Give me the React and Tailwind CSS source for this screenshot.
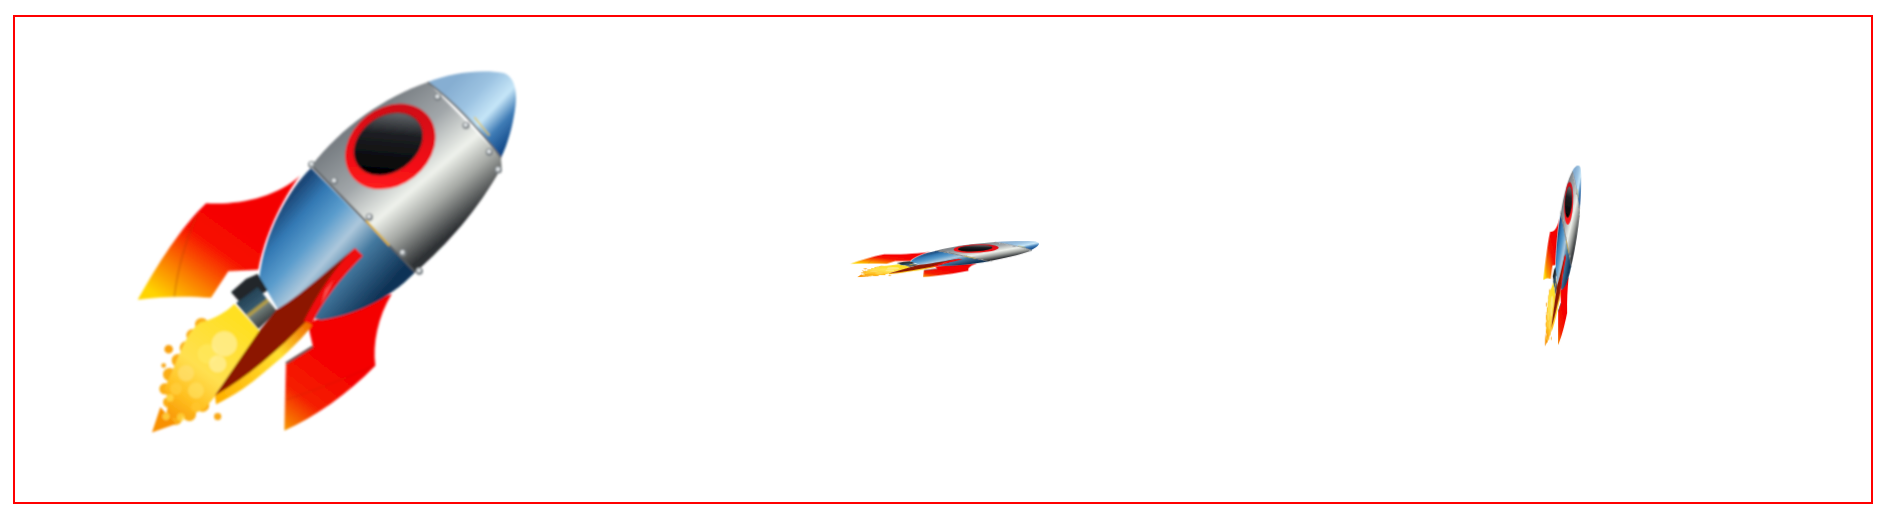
import React from "react";

// flame blobs: [cx, cy, r]
const flameEdge = [
  [242, 792, 20],
  [216, 825, 20],
  [196, 862, 20],
  [172, 900, 20],
  [146, 942, 20],
  [132, 985, 17],
  [142, 1025, 16],
  [130, 1072, 17],
  [165, 1075, 18],
  [205, 1062, 20],
  [245, 1034, 20],
];
const flameBubbles = [
  [195, 938, 24, "#ffe070"],
  [165, 985, 18, "#ffd040"],
  [225, 990, 24, "#ffdf60"],
  [147, 1012, 11, "#ffe050"],
  [225, 1040, 15, "#ffc830"],
  [135, 1068, 11, "#ffe050"],
  [180, 1070, 12, "#ffd840"],
  [260, 880, 30, "#ffe860"],
  [310, 850, 38, "#fff0a0"],
  [290, 910, 26, "#fff0a0"],
];
const rivets = [
  [950, 110],
  [1035, 195],
  [1105, 275],
  [1132, 328],
  [640, 362],
  [745, 470],
  [845, 577],
  [895, 632],
  [572, 312],
];

// same emoji drawing, squashed in different directions
function Rocket({ className = "" }) {
  return (
    <svg viewBox="-21 -31.5 1260 1260" className={`h-[420px] w-[420px] ${className}`}>
      <defs>
        <filter id="soft" x="-5%" y="-5%" width="110%" height="110%">
          <feGaussianBlur stdDeviation="3" />
        </filter>
        <linearGradient id="finLeft" gradientUnits="userSpaceOnUse" x1="340" y1="470" x2="150" y2="735">
          <stop offset="0" stopColor="#f50000" />
          <stop offset="0.32" stopColor="#f81000" />
          <stop offset="0.68" stopColor="#fb7c00" />
          <stop offset="1" stopColor="#ffd400" />
        </linearGradient>
        <linearGradient id="finRight" gradientUnits="userSpaceOnUse" x1="640" y1="900" x2="480" y2="1110">
          <stop offset="0" stopColor="#f50000" />
          <stop offset="0.55" stopColor="#f52000" />
          <stop offset="1" stopColor="#f8a000" />
        </linearGradient>
        <linearGradient id="nose" gradientUnits="userSpaceOnUse" x1="1000" y1="60" x2="1185" y2="235">
          <stop offset="0" stopColor="#86aed2" />
          <stop offset="0.3" stopColor="#9cc3e2" />
          <stop offset="0.56" stopColor="#c6e6f8" />
          <stop offset="0.76" stopColor="#3f7cb6" />
          <stop offset="1" stopColor="#0f4585" />
        </linearGradient>
        <linearGradient id="metal" gradientUnits="userSpaceOnUse" x1="730" y1="170" x2="1010" y2="500">
          <stop offset="0" stopColor="#777d82" />
          <stop offset="0.32" stopColor="#a2a7aa" />
          <stop offset="0.6" stopColor="#eff2ec" />
          <stop offset="0.78" stopColor="#a4a7a3" />
          <stop offset="1" stopColor="#2f3235" />
        </linearGradient>
        <linearGradient id="body" gradientUnits="userSpaceOnUse" x1="450" y1="470" x2="750" y2="735">
          <stop offset="0" stopColor="#1c4676" />
          <stop offset="0.16" stopColor="#3379b4" />
          <stop offset="0.34" stopColor="#5b9dcd" />
          <stop offset="0.52" stopColor="#adc8dc" />
          <stop offset="0.7" stopColor="#44799f" />
          <stop offset="1" stopColor="#0f3356" />
        </linearGradient>
        <linearGradient id="glass" gradientUnits="userSpaceOnUse" x1="870" y1="175" x2="740" y2="330">
          <stop offset="0" stopColor="#6a6e72" />
          <stop offset="0.35" stopColor="#1e2024" />
          <stop offset="1" stopColor="#000000" />
        </linearGradient>
        <linearGradient id="ring" gradientUnits="userSpaceOnUse" x1="900" y1="170" x2="720" y2="360">
          <stop offset="0" stopColor="#d0101a" />
          <stop offset="0.6" stopColor="#f00a14" />
          <stop offset="1" stopColor="#ff1e1e" />
        </linearGradient>
        <linearGradient id="flame" gradientUnits="userSpaceOnUse" x1="370" y1="780" x2="140" y2="1090">
          <stop offset="0" stopColor="#ffe020" />
          <stop offset="0.5" stopColor="#ffe050" />
          <stop offset="0.75" stopColor="#ffc020" />
          <stop offset="1" stopColor="#f89000" />
        </linearGradient>
        <linearGradient id="flameLow" gradientUnits="userSpaceOnUse" x1="560" y1="790" x2="290" y2="1020">
          <stop offset="0" stopColor="#f07000" />
          <stop offset="0.35" stopColor="#ffe030" />
          <stop offset="1" stopColor="#ffb000" />
        </linearGradient>
        <linearGradient id="nozzle" gradientUnits="userSpaceOnUse" x1="370" y1="690" x2="440" y2="780">
          <stop offset="0" stopColor="#1f3a4c" />
          <stop offset="0.5" stopColor="#35596e" />
          <stop offset="0.58" stopColor="#c8a83a" />
          <stop offset="0.66" stopColor="#6f7c78" />
          <stop offset="1" stopColor="#3c4042" />
        </linearGradient>
      </defs>
      <g filter="url(#soft)">
        {/* rear fins */}
        <path
          d="M50 718C110 610 180 500 255 428C350 435 470 410 537 345C480 420 430 530 412 628L322 632L270 712C200 706 120 708 50 718Z"
          fill="url(#finLeft)"
        />
        <path d="M228 462C195 540 170 620 160 708" fill="none" stroke="#a83a10" strokeWidth="3" opacity="0.55" />
        <path
          d="M490 1110L495 905L575 855L560 790L600 770L812 700C770 770 755 850 763 915C680 1000 580 1070 490 1110Z"
          fill="url(#finRight)"
        />
        <path d="M495 908L575 858" stroke="#5a5a5a" strokeWidth="6" fill="none" />
        <path d="M495 1018C580 990 680 950 762 915" fill="none" stroke="#c02000" strokeWidth="2" opacity="0.5" />

        {/* flame */}
        {flameEdge.map(([cx, cy, r]) => (
          <circle key={`${cx}-${cy}`} cx={cx} cy={cy} r={r} fill="#fbae18" />
        ))}
        <path d="M118 1040L93 1116L165 1090Z" fill="#f89000" />
        <path
          d="M340 730L418 815C380 900 330 960 285 1005L250 1045L200 1068L135 1075L142 1020L130 985L165 905C185 860 205 805 240 785C280 775 315 755 340 730Z"
          fill="url(#flame)"
        />
        {flameBubbles.map(([cx, cy, r, fill]) => (
          <circle key={`${cx}-${cy}`} cx={cx} cy={cy} r={r} fill={fill} opacity="0.7" />
        ))}
        <circle cx="143" cy="866" r="13" fill="#f8a010" />
        <circle cx="128" cy="915" r="7" fill="#f8a818" />
        <circle cx="290" cy="1068" r="11" fill="#f8a818" />

        {/* body */}
        <path
          d="M570 322L882 636C800 720 700 765 600 778L470 745L415 650C430 520 500 390 570 322Z"
          fill="url(#body)"
        />
        <path
          d="M920 65L1140 290L1142 320C1070 450 980 550 882 636L570 318C660 200 790 110 920 65Z"
          fill="url(#metal)"
        />
        <path
          d="M920 65C990 35 1090 25 1150 38C1180 50 1190 90 1183 140C1175 200 1160 250 1140 292C1075 205 1000 125 920 65Z"
          fill="url(#nose)"
        />

        {/* seams */}
        <path d="M572 316L882 634" stroke="#55595c" strokeWidth="6" fill="none" />
        <path d="M920 65C1000 125 1075 205 1140 292" stroke="#6a6e70" strokeWidth="5" fill="none" />
        <path d="M735 480L805 555" stroke="#e8b820" strokeWidth="5" fill="none" />
        <path d="M1060 170L1105 225" stroke="#e8c850" strokeWidth="4" fill="none" />

        {/* porthole */}
        <ellipse cx="808" cy="258" rx="146" ry="116" transform="rotate(-38 808 258)" fill="url(#ring)" />
        <ellipse cx="802" cy="250" rx="113" ry="85" transform="rotate(-35 802 250)" fill="#7a2024" />
        <ellipse cx="802" cy="250" rx="110" ry="82" transform="rotate(-35 802 250)" fill="url(#glass)" />

        {/* rivets */}
        {rivets.map(([cx, cy]) => (
          <g key={`${cx}-${cy}`}>
            <circle cx={cx} cy={cy} r="11" fill="#7e8488" />
            <circle cx={cx - 1} cy={cy - 2} r="6" fill="#e4e8ea" />
          </g>
        ))}

        {/* nozzle */}
        <path d="M330 695L375 655L410 640L440 690L365 735Z" fill="#23272a" />
        <path d="M345 728L410 680L468 752L412 806Z" fill="url(#nozzle)" />

        {/* centre fin */}
        <path d="M282 1005L545 770L574 795C530 850 480 895 430 935C390 970 340 1005 285 1032Z" fill="url(#flameLow)" />
        <path d="M282 1005L416 810L466 748C560 690 640 610 702 562L640 680L556 782C470 870 380 950 282 1005Z" fill="#8c1400" />
        <path d="M702 562L726 586C660 650 600 730 572 790L548 782C590 700 640 620 702 562Z" fill="#f00a0a" />
        <path d="M612 690L640 655L600 735Z" fill="#ff8080" opacity="0.6" />
      </g>
    </svg>
  );
}

export default function App() {
  return (
    <div className="bg-white pt-[15px] pl-[13px]">
      <div className="grid h-[489px] w-[1860px] grid-cols-3 place-items-center overflow-hidden border-2 border-[#ff0000]">
        <Rocket />
        <Rocket className="scale-x-50 scale-y-10" />
        <Rocket className="scale-x-10 scale-y-50" />
      </div>
    </div>
  );
}
